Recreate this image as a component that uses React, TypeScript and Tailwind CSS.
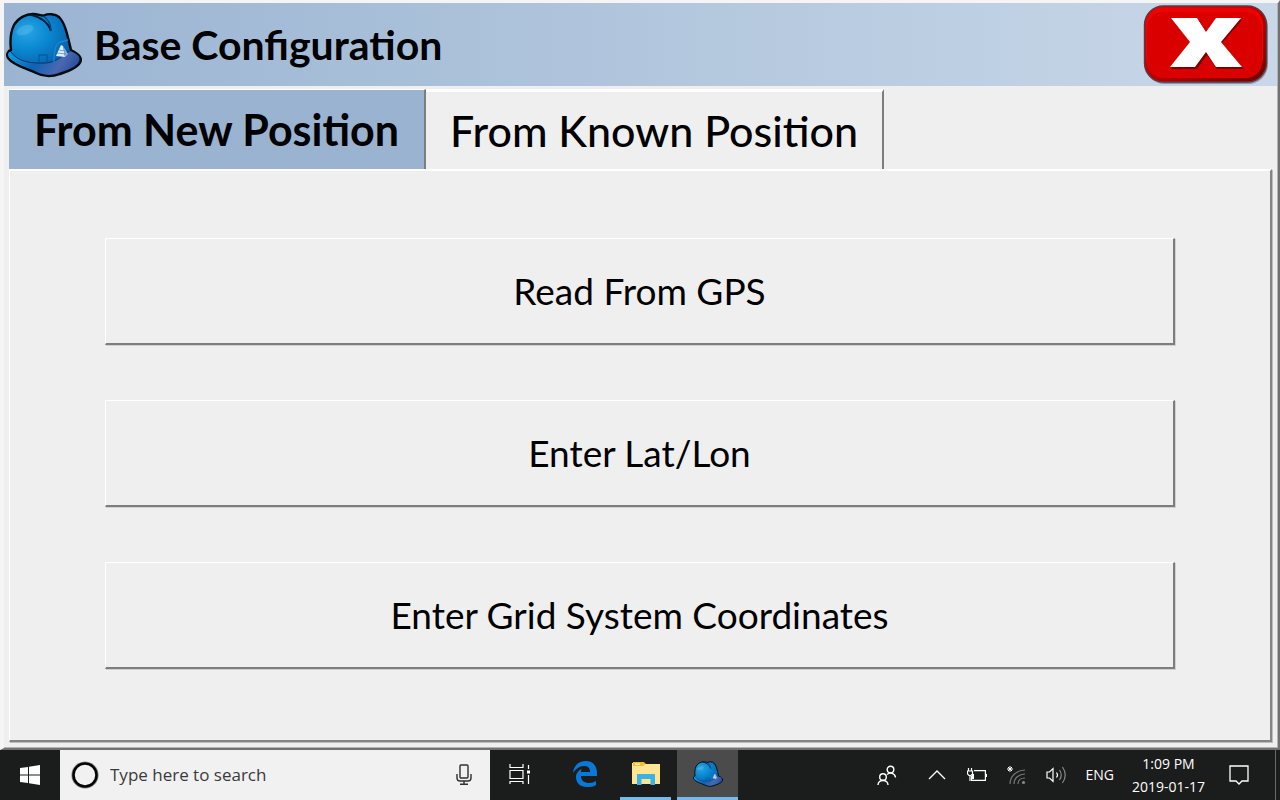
import { useState, type ReactNode } from "react"

const tabs = ["From New Position", "From Known Position"]

const actions = ["Read From GPS", "Enter Lat/Lon", "Enter Grid System Coordinates"]

function HardHat({ className }: { className: string }) {
  return (
    <svg viewBox="0 0 76 66" className={className} aria-hidden="true">
      <defs>
        <radialGradient id="dome" cx="0.27" cy="0.28" r="0.8">
          <stop offset="0" stopColor="#2aa3e4" />
          <stop offset="0.35" stopColor="#0b8ad2" />
          <stop offset="0.7" stopColor="#0768b5" />
          <stop offset="1" stopColor="#064488" />
        </radialGradient>
        <linearGradient id="brim" x1="0" x2="1" y1="0.3" y2="0.5">
          <stop offset="0" stopColor="#1499de" />
          <stop offset="0.4" stopColor="#0f62b2" />
          <stop offset="0.75" stopColor="#4a68b0" />
          <stop offset="1" stopColor="#2a4f9c" />
        </linearGradient>
      </defs>
      <path
        d="M5 38 C4 30 4 21 8 13 C12 6 20 2 27 2 C32 2 35 4 38 3.5 C42 1.5 49 1.5 53 5 C59 11 61 21 65 38 C71 41 75 44 75 48 C74 55 64 59 54 62 C46 65 38 65 30 61 C20 56 8 54 2 46 C0 42 2 39 5 38 Z"
        fill="url(#dome)"
        stroke="#06090d"
        strokeWidth="2.4"
        strokeLinejoin="round"
      />
      <path
        d="M4 40 C12 50 25 52 40 51 C52 50 58 42 65 39.5 C72 42 74 45 73 48 C72 54 62 58 53 60.5 C46 63.5 38 63.5 31 59.5 C21 55 8 52 3 45 C1 42 3 40 4 40 Z"
        fill="url(#brim)"
      />
      <path d="M5 40 C12 50 25 51.5 40 51 C51 50 57 43 63 39" fill="none" stroke="#07356b" strokeWidth="1" />
      <path d="M24 2.5 C34 5 42 9 45 19" fill="none" stroke="#041d3a" strokeWidth="2.2" />
      <path d="M37 4 C42 7 45 12 45 19" fill="none" stroke="#06417b" strokeWidth="1.4" />
      <path d="M48 50 C48 40 49 32 54 30 L62 28" fill="none" stroke="#1c86d2" strokeWidth="1.3" />
      <path d="M33 51 V43 H41 V51" fill="none" stroke="#07508f" strokeWidth="1" />
      <ellipse cx="19" cy="18" rx="9" ry="4.5" fill="#7bcaf2" opacity="0.3" transform="rotate(-20 19 18)" />
      <path d="M55 33 L57 34 L59 45 L50 44 Z" fill="#e3eef8" />
      <path d="M57 34 L62 42 L59 45 Z" fill="#86b2dc" />
      <path d="M51 41 L60 42 M53 38 L59 39" stroke="#3b7bbb" strokeWidth="0.7" />
    </svg>
  )
}

function CloseIcon() {
  return (
    <svg viewBox="0 0 126 80" className="h-20 w-[126px]" aria-hidden="true">
      <defs>
        <linearGradient id="closeEdge" x1="0" x2="1" y1="0" y2="1">
          <stop offset="0" stopColor="#e80000" />
          <stop offset="0.6" stopColor="#b00000" />
          <stop offset="1" stopColor="#6a0000" />
        </linearGradient>
      </defs>
      <rect x="2" y="2" width="123" height="77" rx="20" fill="#4d5665" opacity="0.5" />
      <rect x="1.5" y="1" width="122" height="76" rx="19" fill="url(#closeEdge)" stroke="#5b3a45" strokeWidth="1.4" />
      <rect x="3" y="2.5" width="117" height="68" rx="17" fill="#f00000" />
      <rect x="4" y="7" width="115" height="66" rx="16" fill="#da0000" />
      <path d="M30 15 H56 L64 28 L74 15 H99 L79 38 L101 64 H74 L64 50 L54 64 H28 L48 38 Z" fill="#7a0000" />
      <path d="M28 13 H54 L63 27 L73 13 H98 L78 37 L99 62 H73 L63 47 L52 62 H27 L47 37 Z" fill="#fff" />
    </svg>
  )
}

function TitleBar() {
  return (
    <header className="flex h-[83px] items-center justify-between bg-gradient-to-r from-[#9ab4d2] to-[#c9d8e8] pr-2 pl-0.5">
      <div className="flex items-center gap-3">
        <HardHat className="h-[66px] w-[76px]" />
        <h1 className="text-[41px] leading-[48px] font-bold">Base Configuration</h1>
      </div>
      <button type="button" aria-label="Close">
        <CloseIcon />
      </button>
    </header>
  )
}

type TaskButtonProps = {
  label: string
  className: string
  children: ReactNode
}

function TaskButton({ label, className, children }: TaskButtonProps) {
  return (
    <button type="button" aria-label={label} className={`flex h-full items-center justify-center border-b-3 ${className}`}>
      {children}
    </button>
  )
}

function Taskbar() {
  return (
    <footer className="flex h-[50px] items-center bg-[#1b1c1c] font-['Open_Sans',sans-serif] text-white">
      <button type="button" aria-label="Start" className="flex h-full w-[60px] items-center justify-center">
        <svg viewBox="0 0 20 20" className="size-5" fill="#fff" aria-hidden="true">
          <path d="M0 3 L8 2 V9.4 H0 Z M9 1.8 L20 0 V9.4 H9 Z M0 10.4 H8 V18 L0 17 Z M9 10.4 H20 V20 L9 18.2 Z" />
        </svg>
      </button>

      <label className="flex h-full w-[430px] items-center bg-[#f1f1f1] pr-[18px] pl-[11px]">
        <svg viewBox="0 0 28 28" className="size-7 shrink-0" fill="none" aria-hidden="true">
          <circle cx="14" cy="14" r="12.6" stroke="#888" strokeWidth="2" />
          <circle cx="14" cy="14" r="11.5" stroke="#050505" strokeWidth="2.6" />
        </svg>
        <input
          type="text"
          aria-label="Search"
          placeholder="Type here to search"
          className="min-w-0 flex-1 bg-transparent px-[11px] text-[17px] outline-none placeholder:text-[#3a3a3a]"
        />
        <svg viewBox="0 0 16 22" className="h-[22px] w-4" fill="none" stroke="#303030" strokeWidth="1.4" aria-hidden="true">
          <rect x="4" y="1" width="8" height="13" rx="1" />
          <path d="M1 10 V14 Q1 17 4 17 H12 Q15 17 15 14 V10 M8 17 V20 M4 20.3 H12" />
        </svg>
      </label>

      <div className="flex h-full flex-1 gap-1.5">
        <TaskButton label="Task View" className="w-[59px] border-transparent">
          <svg viewBox="0 0 22 20" className="h-5 w-[22px]" fill="none" stroke="#fff" strokeWidth="1.2" aria-hidden="true">
            <path d="M1 0 V3.5 H14 V0 M1 6.5 H14 V14.5 H1 Z M1 20 V17.5 H14 V20 M19.5 1 V5 M19.5 11 V20" />
            <rect x="18" y="6.5" width="3" height="3" fill="#fff" stroke="none" />
          </svg>
        </TaskButton>
        <TaskButton label="Edge" className="w-[59px] border-transparent">
          <svg viewBox="0 0 24 26" className="h-[26px] w-6" aria-hidden="true">
            <path
              d="M0 12 C1 4 6 0 13 0 C20 0 24 5 24 12 V15 H8 C8 20 12 22 16 22 C19 22 21 21 23 20 V24 C20 26 17 26 14 26 C7 26 3 22 3 16 C3 12 6 9 9 8 C8 9 8 10 8 11 H17 C17 7 15 5 11 5 C6 5 3 8 0 12 Z"
              fill="#0a78d7"
            />
          </svg>
        </TaskButton>
        <TaskButton label="File Explorer" className="w-[51px] border-[#76b9ed]">
          <svg viewBox="0 0 28 24" className="h-6 w-7" aria-hidden="true">
            <path d="M0 1 H12 L14 2 H28 V22 H0 Z" fill="#ffe494" />
            <path d="M1 0 H12 L13.5 2 L11 4 H1 Z" fill="#f5bd2a" />
            <path d="M3 1.5 H8 V3 H3 Z" fill="#fff3c9" />
            <path d="M5 23 V12 H23 V23 H18.5 V17 H9.5 V23 Z" fill="#37b3e8" />
          </svg>
        </TaskButton>
        <TaskButton label="Base Configuration" className="w-[61px] border-[#76b9ed] bg-[#4b4b4b]">
          <HardHat className="h-[26px] w-[30px]" />
        </TaskButton>
      </div>

      <div className="flex h-full items-center">
        <button type="button" aria-label="People" className="mr-[31px]">
          <svg viewBox="0 0 20 20" className="size-5" fill="none" stroke="#fff" strokeWidth="1.4" aria-hidden="true">
            <circle cx="13.5" cy="4.5" r="3.3" />
            <circle cx="6" cy="12" r="3.3" />
            <path d="M1 20 C1 14 11 14 11 20 M10 9.5 C13 7 18 8 18.5 12.5" />
          </svg>
        </button>
        <button type="button" aria-label="Show hidden icons" className="mr-[21px]">
          <svg viewBox="0 0 18 10" className="h-2.5 w-[18px]" fill="none" stroke="#fff" strokeWidth="1.3" aria-hidden="true">
            <path d="M1 9 L9 1 L17 9" />
          </svg>
        </button>
        <button type="button" aria-label="Battery" className="mr-5">
          <svg viewBox="0 0 20 14" className="h-3.5 w-5" fill="none" stroke="#fff" strokeWidth="1.2" aria-hidden="true">
            <path d="M7 2.6 H18.4 V12.4 H4.6 V8 M19.4 6 V9 M1.5 0 V3 M4.5 0 V3 M0.5 3 H5.5 V6 L4 7.5 H2 L0.5 6 Z M3 7.5 V13" />
            <path d="M5 6 H7 V11 H5 Z" fill="#fff" stroke="none" />
          </svg>
        </button>
        <button type="button" aria-label="Network" className="mr-5">
          <svg viewBox="0 0 19 19" className="size-[19px]" fill="none" stroke="#777" strokeWidth="1.2" aria-hidden="true">
            <path d="M3 18 C3 10 10 4 18 4 M7 18 C7 12 12 8 18 8 M11 18 C11 14 14 12 18 12" />
            <circle cx="16.5" cy="16.5" r="1.6" fill="#888" stroke="none" />
            <path d="M3 0 V6 M0 3 H6 M1 1 L5 5 M5 1 L1 5" stroke="#fff" strokeWidth="1" />
          </svg>
        </button>
        <button type="button" aria-label="Volume" className="mr-[18px]">
          <svg viewBox="0 0 21 18" className="h-[18px] w-[21px]" fill="none" stroke="#fff" strokeWidth="1.2" aria-hidden="true">
            <path d="M1 6 H3.5 L7 2.6 V15.4 L3.5 12 H1 Z M10.5 6.5 Q12.5 9 10.5 11.5" />
            <path d="M13.5 4 Q17 9 13.5 14 M16.5 1 Q22 9 16.5 17" stroke="#888" />
          </svg>
        </button>
        <span className="mr-[18px] text-sm">ENG</span>
        <div className="mr-6 text-center text-sm leading-[23px]">
          <p>1:09 PM</p>
          <p>2019-01-17</p>
        </div>
        <button type="button" aria-label="Notifications" className="mr-[26px]">
          <svg viewBox="0 0 20 20" className="size-5" fill="none" stroke="#fff" strokeWidth="1.3" aria-hidden="true">
            <path d="M1 1 H19 V16 H13 L10 19 L7 16 H1 Z" />
          </svg>
        </button>
        <div className="h-[50px] w-[5px] border-l border-[#6a6a6a]" />
      </div>
    </footer>
  )
}

export default function App() {
  const [selected, setSelected] = useState(0)

  return (
    <div className="flex min-h-screen flex-col bg-[#efefef] font-['Lato',sans-serif] text-black">
      <main className="flex flex-1 flex-col border-t-3 border-r-2 border-b-2 border-l-4 border-t-[#f5f5f5] border-r-[#717171] border-b-[#717171] border-l-[#f5f5f5] pr-px pb-px shadow-[inset_-1px_-1px_0_#b4b4b4]">
        <TitleBar />

        <div className="flex flex-1 flex-col px-[5px] pt-[3px] pb-[5px]">
          <div role="tablist" className="flex h-20">
            {tabs.map((tab, i) => (
              <button
                key={tab}
                type="button"
                role="tab"
                aria-selected={selected === i}
                onClick={() => setSelected(i)}
                className={`border-r-2 border-t-white border-r-[#7d7d7d] text-[43px] leading-[48px] ${
                  i === 0 ? "w-[417px]" : "w-[458px]"
                } ${selected === i ? "border-t bg-[#9ab3d1] font-bold" : "border-t-3 font-medium"}`}
              >
                {tab}
              </button>
            ))}
          </div>

          <section
            role="tabpanel"
            className="flex flex-1 flex-col gap-[55px] border-t-2 border-r-2 border-b-2 border-l border-t-white border-r-[#858585] border-b-[#858585] border-l-white px-[95px] pt-[67px] pb-[71px] shadow-[1px_1px_0_#bdbdbd]"
          >
            {actions.map((action) => (
              <button
                key={action}
                type="button"
                className="flex-1 border-t border-r-2 border-b-2 border-l border-t-white border-r-[#7d7d7d] border-b-[#7d7d7d] border-l-white text-[37px] leading-[44px] shadow-[1px_1px_0_#d0d0d0]"
              >
                {action}
              </button>
            ))}
          </section>
        </div>
      </main>
      <Taskbar />
    </div>
  )
}
